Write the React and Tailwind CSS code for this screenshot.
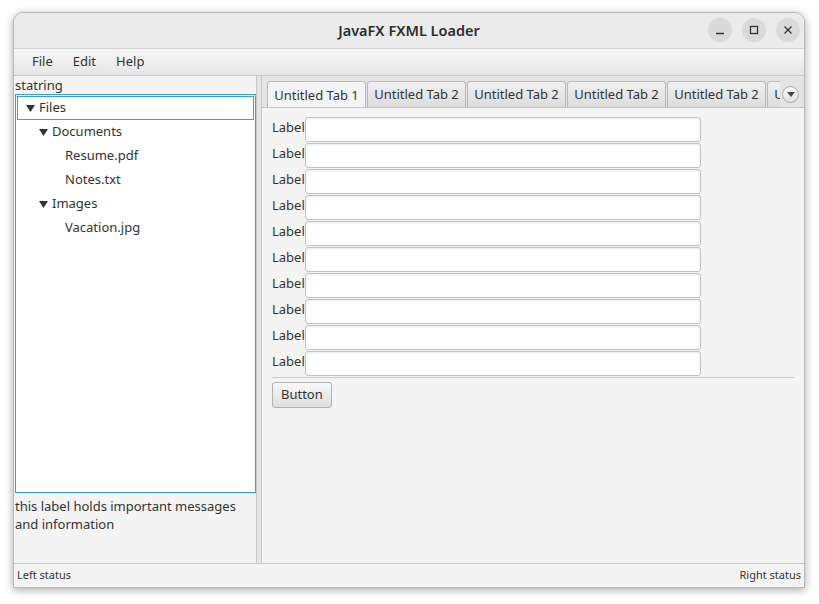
import React from 'react';

const font = { fontFamily: '"Noto Sans", "Open Sans", sans-serif' };

const Tri = () => (
  <svg width="9" height="7" viewBox="0 0 9 7" className="shrink-0">
    <path d="M0 0 L9 0 L4.5 7 Z" fill="#333" />
  </svg>
);

const TreeRow = ({ indent, arrow, label, selected }) => (
  <div
    className={`flex items-center h-[24px] ${selected ? 'border border-[#3aa0d8] bg-white' : 'border border-transparent'}`}
    style={{ paddingLeft: indent }}
  >
    {arrow ? <span className="w-[13px] flex items-center"><Tri /></span> : <span className="w-[13px]" />}
    <span className="text-[13px] text-[#333]">{label}</span>
  </div>
);

const tabs = ['Untitled Tab 1', 'Untitled Tab 2', 'Untitled Tab 2', 'Untitled Tab 2', 'Untitled Tab 2', 'Untitled Tab 2'];

export default function App() {
  return (
    <div className="w-[819px] h-[604px] bg-white pl-[13px] pt-[12px]" style={font}>
      <div className="w-[792px] h-[576px] flex flex-col rounded-t-[10px] border border-[#b8b8b8] bg-[#f4f4f4] shadow-[0_2px_8px_rgba(0,0,0,0.35)] overflow-hidden">
        {/* title bar */}
        <div className="h-[36px] shrink-0 bg-[#ebebeb] border-b border-[#d4d4d4] flex items-center relative">
          <div className="flex-1 text-center text-[14.5px] font-semibold text-[#2e2e2e]">JavaFX FXML Loader</div>
          <div className="absolute right-[4px] top-[5px] flex gap-[10px]">
            <div className="w-[24px] h-[24px] rounded-full bg-[#dadada] flex items-center justify-center">
              <svg width="10" height="10" viewBox="0 0 10 10"><path d="M1 8.5 H9" stroke="#333" strokeWidth="1.3" /></svg>
            </div>
            <div className="w-[24px] h-[24px] rounded-full bg-[#dadada] flex items-center justify-center">
              <svg width="10" height="10" viewBox="0 0 10 10"><rect x="1.5" y="1.5" width="7" height="7" fill="none" stroke="#333" strokeWidth="1.3" /></svg>
            </div>
            <div className="w-[24px] h-[24px] rounded-full bg-[#dadada] flex items-center justify-center">
              <svg width="10" height="10" viewBox="0 0 10 10"><path d="M1.5 1.5 L8.5 8.5 M8.5 1.5 L1.5 8.5" stroke="#333" strokeWidth="1.3" /></svg>
            </div>
          </div>
        </div>
        {/* menubar */}
        <div className="h-[27px] shrink-0 bg-gradient-to-b from-[#f7f7f7] to-[#e6e6e6] border-b border-[#c4c4c4] flex items-center pl-[18px] gap-[20px] text-[13px] text-[#333]">
          <span>File</span>
          <span>Edit</span>
          <span>Help</span>
        </div>
        {/* main */}
        <div className="flex-1 flex min-h-0">
          {/* left pane */}
          <div className="w-[243px] shrink-0 flex flex-col border-r border-[#c8c8c8]">
            <div className="text-[13px] text-[#333] leading-[18px] pl-[1px]">statring</div>
            <div className="h-[399px] ml-[1px] border border-[#3aa0d8] bg-white p-[1px]">
              <TreeRow indent={8} arrow label="Files" selected />
              <TreeRow indent={21} arrow label="Documents" />
              <TreeRow indent={34} label="Resume.pdf" />
              <TreeRow indent={34} label="Notes.txt" />
              <TreeRow indent={21} arrow label="Images" />
              <TreeRow indent={34} label="Vacation.jpg" />
            </div>
            <div className="text-[13px] text-[#333] leading-[18px] pl-[1px] pt-[4px]">
              this label holds important messages<br />and information
            </div>
          </div>
          {/* divider */}
          <div className="w-[5px] shrink-0 bg-[#e4e4e4] border-r border-[#c8c8c8]" />
          {/* right pane */}
          <div className="flex-1 flex flex-col min-w-0">
            <div className="h-[32px] shrink-0 bg-[#e4e4e4] border-b border-[#c2c2c2] flex items-end pl-[5px]">
              <div className="w-[513px] flex items-end overflow-hidden">
                {tabs.map((t, i) => (
                  <div
                    key={i}
                    className={`shrink-0 w-[99px] mr-[1px] pt-[1px] flex items-center justify-center border border-b-0 border-[#b8b8b8] rounded-t-[3px] text-[13px] text-[#333] whitespace-nowrap ${i === 0 ? 'bg-[#f4f4f4] h-[27px] -mb-[1px]' : 'h-[26px] bg-gradient-to-b from-[#f0f0f0] to-[#dcdcdc]'}`}
                  >
                    {t}
                  </div>
                ))}
              </div>
              <div className="self-center mt-[6px] ml-[2px] w-[17px] h-[17px] rounded-full border border-[#aaa] bg-gradient-to-b from-[#fafafa] to-[#e0e0e0] flex items-center justify-center">
                <svg width="8" height="5" viewBox="0 0 8 5"><path d="M0 0 H8 L4 5 Z" fill="#444" /></svg>
              </div>
            </div>
            <div className="flex-1 bg-[#f4f4f4] pl-[10px] pr-[9px] pt-[9px] flex flex-col">
              <div className="flex flex-col">
                {Array.from({ length: 10 }).map((_, i) => (
                  <div key={i} className="flex items-start h-[26px]">
                    <span className="w-[33px] text-[13px] text-[#333] leading-[18px] pt-[1px]">Label</span>
                    <div className="w-[396px] h-[25px] bg-white border border-[#c2c2c2] rounded-[3px] shadow-[inset_0_1px_2px_rgba(0,0,0,0.08)]" />
                  </div>
                ))}
              </div>
              <div className="h-px bg-[#c8c8c8] w-[522px]" />
              <div className="mt-[3px]">
                <div className="inline-flex items-center h-[26px] px-[8px] border border-[#b0b0b0] rounded-[3px] bg-gradient-to-b from-[#f8f8f8] to-[#dedede] text-[13px] text-[#333]">
                  Button
                </div>
              </div>
            </div>
          </div>
        </div>
        {/* status bar */}
        <div className="h-[24px] shrink-0 border-t border-[#c8c8c8] bg-[#f4f4f4] flex items-center justify-between px-[3px] text-[11px] text-[#333]">
          <span>Left status</span>
          <span>Right status</span>
        </div>
      </div>
    </div>
  );
}
